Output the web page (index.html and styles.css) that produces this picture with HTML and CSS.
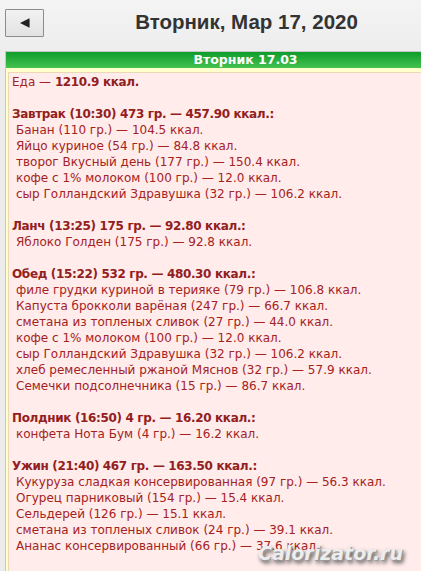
FILE: index.html
```html
<!DOCTYPE html>
<html lang="ru">
<head>
<meta charset="utf-8">
<title>Дневник питания</title>
<link rel="stylesheet" href="styles.css">
</head>
<body>
<div class="top">
  <button class="back" type="button" aria-label="Назад">
    <svg width="12" height="10" viewBox="0 0 12 10"><polygon points="1,5 10,0.5 10,9.5" fill="#222"/><line x1="10.5" y1="0.5" x2="10.5" y2="9.5" stroke="#3a7fd0" stroke-width="1"/></svg>
  </button>
  <h1 class="title">Вторник, Мар 17, 2020</h1>
</div>
<div class="panel">
  <div class="panel-head">Вторник 17.03</div>
  <div class="panel-body">
    <div class="content">
      <div class="line">Еда — <b>1210.9 ккал.</b></div>
      <div class="gap"></div>
      <div class="line meal">Завтрак (10:30) 473 гр. — 457.90 ккал.:</div>
      <div class="line item">Банан (110 гр.) — 104.5 ккал.</div>
      <div class="line item">Яйцо куриное (54 гр.) — 84.8 ккал.</div>
      <div class="line item">творог Вкусный день (177 гр.) — 150.4 ккал.</div>
      <div class="line item">кофе с 1% молоком (100 гр.) — 12.0 ккал.</div>
      <div class="line item">сыр Голландский Здравушка (32 гр.) — 106.2 ккал.</div>
      <div class="gap"></div>
      <div class="line meal">Ланч (13:25) 175 гр. — 92.80 ккал.:</div>
      <div class="line item">Яблоко Голден (175 гр.) — 92.8 ккал.</div>
      <div class="gap"></div>
      <div class="line meal">Обед (15:22) 532 гр. — 480.30 ккал.:</div>
      <div class="line item">филе грудки куриной в терияке (79 гр.) — 106.8 ккал.</div>
      <div class="line item">Капуста брокколи варёная (247 гр.) — 66.7 ккал.</div>
      <div class="line item">сметана из топленых сливок (27 гр.) — 44.0 ккал.</div>
      <div class="line item">кофе с 1% молоком (100 гр.) — 12.0 ккал.</div>
      <div class="line item">сыр Голландский Здравушка (32 гр.) — 106.2 ккал.</div>
      <div class="line item">хлеб ремесленный ржаной Мяснов (32 гр.) — 57.9 ккал.</div>
      <div class="line item">Семечки подсолнечника (15 гр.) — 86.7 ккал.</div>
      <div class="gap"></div>
      <div class="line meal">Полдник (16:50) 4 гр. — 16.20 ккал.:</div>
      <div class="line item">конфета Нота Бум (4 гр.) — 16.2 ккал.</div>
      <div class="gap"></div>
      <div class="line meal">Ужин (21:40) 467 гр. — 163.50 ккал.:</div>
      <div class="line item">Кукуруза сладкая консервированная (97 гр.) — 56.3 ккал.</div>
      <div class="line item">Огурец парниковый (154 гр.) — 15.4 ккал.</div>
      <div class="line item">Сельдерей (126 гр.) — 15.1 ккал.</div>
      <div class="line item">сметана из топленых сливок (24 гр.) — 39.1 ккал.</div>
      <div class="line item">Ананас консервированный (66 гр.) — 37.6 ккал.</div>
    </div>
  </div>
</div>
<div class="watermark">Calorizator.ru</div>
</body>
</html>
```

FILE: styles.css
```css
html, body {
  margin: 0;
  padding: 0;
}
body {
  width: 421px;
  height: 571px;
  overflow: hidden;
  background: linear-gradient(#f4f4f4, #ececec 60px, #ececec);
  position: relative;
}
.top {
  padding: 9px 0 0 5px;
  height: 51px;
  box-sizing: border-box;
  display: grid;
  grid-template-columns: 39px 1fr;
  align-items: start;
}
.back {
  width: 39px;
  height: 28px;
  margin: 0;
  padding: 0;
  border: 1px solid #8c8c8c;
  border-radius: 1px;
  background: linear-gradient(#f2f2f2, #e2e2e2);
  display: flex;
  align-items: center;
  justify-content: center;
}
.back svg { display: block; }
.title {
  margin: 0;
  padding-left: 28px;
  text-align: center;
  font-family: "Liberation Sans", Arial, sans-serif;
  font-weight: bold;
  font-size: 20.5px;
  line-height: 26px;
  color: #333;
  white-space: nowrap;
}
.panel {
  margin-left: 5px;
  border: 1px solid #c8c8c8;
  border-right: none;
  border-bottom: none;
  background: #ffffcc;
}
.panel-head {
  height: 16px;
  padding-left: 64px;
  background: linear-gradient(#0e9c2a, #44c250);
  color: #fff;
  text-align: center;
  font-family: "DejaVu Sans", Verdana, sans-serif;
  font-weight: bold;
  font-size: 12.5px;
  line-height: 16px;
  white-space: nowrap;
}
.panel-body {
  padding: 4px 0 0 2px;
}
.content {
  background: #ffeceb;
  border-top: 1px solid #ead8b8;
  border-left: 1px solid #ead8b8;
  padding: 1px 0 40px 3px;
  color: #a52222;
  font-family: "DejaVu Sans", Verdana, sans-serif;
  font-size: 12px;
  line-height: 16px;
}
.line { white-space: nowrap; }
.gap { height: 16px; }
.meal { font-weight: bold; color: #922020; letter-spacing: -0.35px; }
.line b { color: #922020; letter-spacing: -0.35px; }
.item { padding-left: 4px; }
.watermark {
  position: absolute;
  left: 258px;
  top: 542px;
  font-family: "DejaVu Sans", Verdana, sans-serif;
  font-weight: bold;
  font-style: italic;
  font-size: 19px;
  color: #ededed;
  text-shadow: 1px 1px 0 #999, 2px 3px 4px #444;
}
```
